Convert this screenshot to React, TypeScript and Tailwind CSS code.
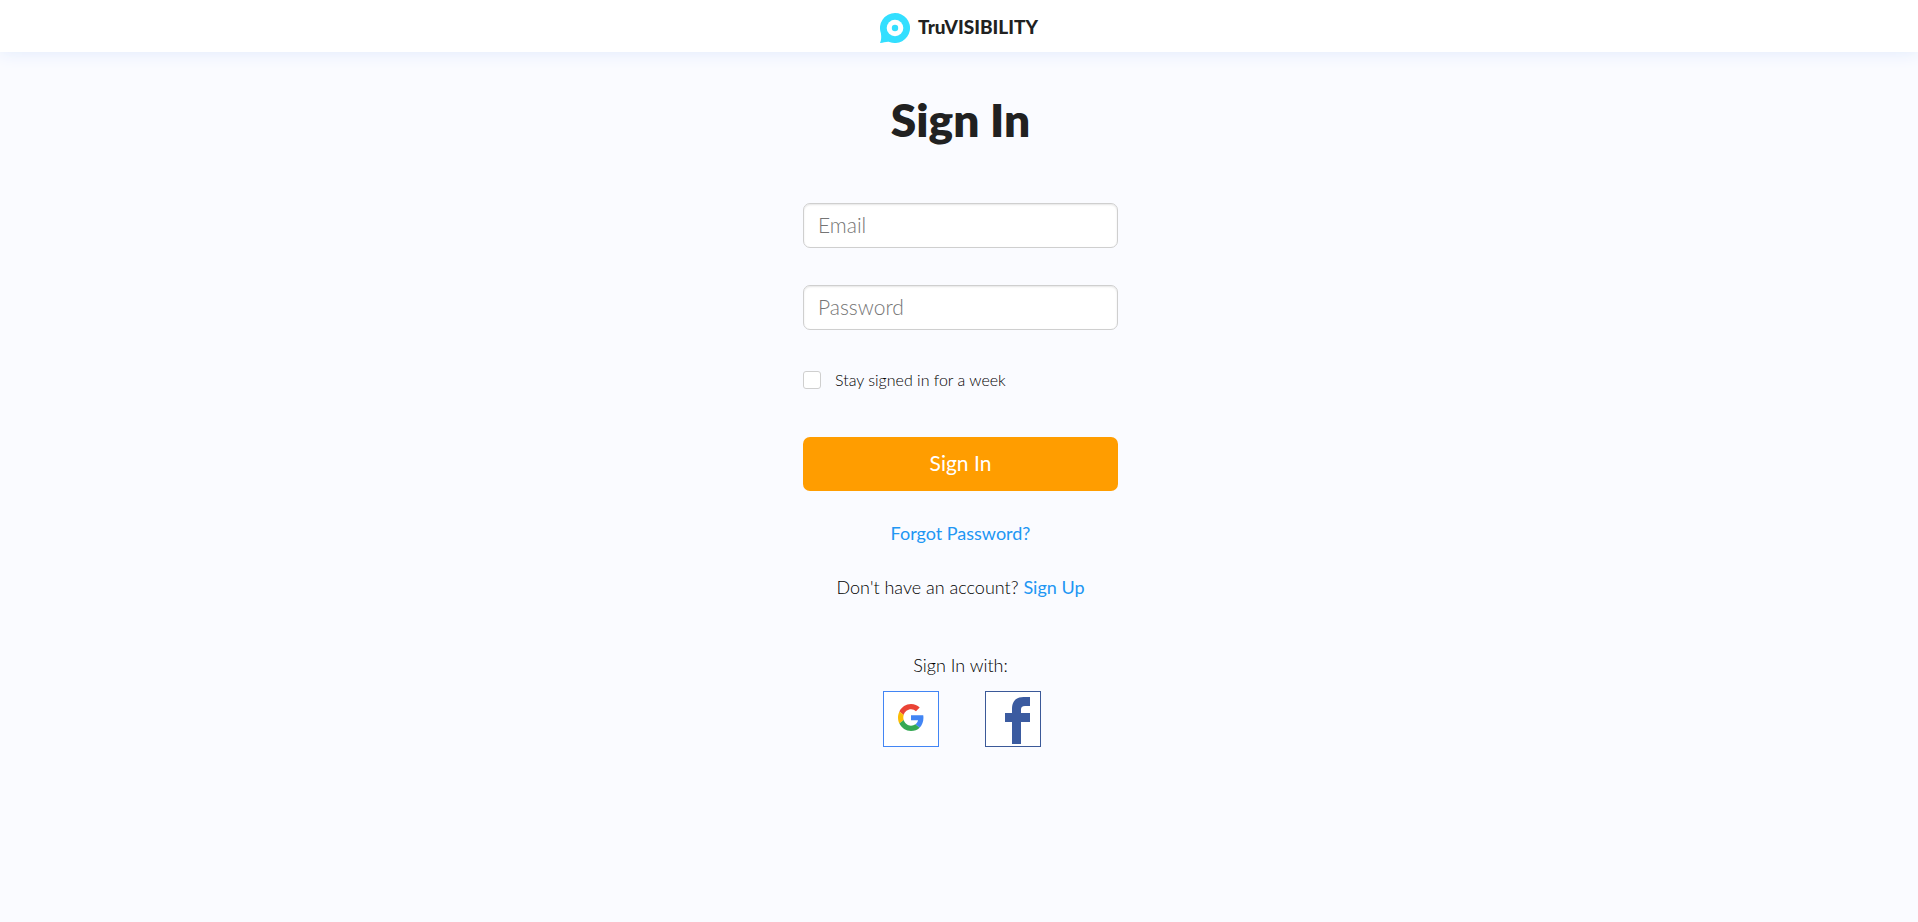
import React from "react";

function LogoMark() {
  return (
    <svg width="30" height="30" viewBox="0 0 30 30" aria-hidden="true">
      <path
        fill="#33dfff"
        d="M15 0a15 15 0 1 1-5.6 28.9C6.6 28.3 3.5 30 0 30c1-2.400 1.600-5 .9-9.800A15 15 0 0 1 15 0z"
      />
      <circle cx="15" cy="15" r="8.300" fill="#fff" />
      <circle cx="15" cy="15" r="3.200" fill="#33dfff" />
    </svg>
  );
}

function GoogleMark() {
  return (
    <svg width="26" height="27" viewBox="0 0 48 48" preserveAspectRatio="none" aria-hidden="true">
      <path fill="#EA4335" d="M24 9.500c3.540 0 6.710 1.220 9.210 3.600l6.850-6.850C35.900 2.380 30.470 0 24 0 14.620 0 6.510 5.380 2.560 13.220l7.980 6.190C12.430 13.720 17.740 9.500 24 9.500z" />
      <path fill="#4285F4" d="M46.980 24.550c0-1.570-.15-3.090-.38-4.550H24v9.020h12.940c-.58 2.960-2.260 5.480-4.780 7.180l7.730 6c4.510-4.180 7.090-10.360 7.090-17.650z" />
      <path fill="#FBBC05" d="M10.530 28.590c-.48-1.450-.76-2.990-.76-4.590s.27-3.140.76-4.590l-7.980-6.190C.92 16.460 0 20.120 0 24c0 3.880.92 7.540 2.560 10.780l7.970-6.190z" />
      <path fill="#34A853" d="M24 48c6.480 0 11.930-2.130 15.890-5.810l-7.730-6c-2.150 1.450-4.920 2.300-8.160 2.300-6.260 0-11.570-4.220-13.470-9.910l-7.980 6.190C6.510 42.620 14.620 48 24 48z" />
    </svg>
  );
}

function FacebookMark() {
  return (
    <svg width="25" height="47" viewBox="0 0 25 47" aria-hidden="true">
      <path
        fill="#3b5ba0"
        d="M7 47V25H0v-9h7v-4C7 4 11.500 0 18.500 0H25v9h-5c-3 0-4 1.200-4 3.500V16h9v9h-9v22z"
      />
    </svg>
  );
}

const fieldClass =
  "h-[45px] w-full rounded-[7px] border border-[#cfcfcf] bg-white px-[14px] pb-[2px] text-[21px] font-light text-[#212121] shadow-[inset_0_1px_2px_rgba(0,0,0,0.1)] outline-none placeholder:text-[#757575] focus:border-[#2196f3]";

export default function App() {
  return (
    <div className="min-h-screen bg-[#fafbff] font-['Lato','Open_Sans',sans-serif] text-[#212121]">
      <header className="flex h-[52px] items-center justify-center gap-2 bg-white pt-1 shadow-[0_0_18px_#dfe9fb]">
        <LogoMark />
        <span className="pb-[2px] text-[19px] leading-6 font-black">TruVISIBILITY</span>
      </header>

      <div className="pl-[3px]">
        <main className="mx-auto flex w-full max-w-[315px] flex-col items-center">
          <h1 className="mt-10 text-[46px] leading-[56px] font-extrabold">Sign In</h1>

          <form className="mt-[55px] flex w-full flex-col" onSubmit={(e) => e.preventDefault()}>
            <input type="email" aria-label="Email" placeholder="Email" className={fieldClass} />
            <input type="password" aria-label="Password" placeholder="Password" className={`${fieldClass} mt-[37px]`} />
            <label className="mt-10 flex items-center gap-[14px] text-base leading-5 font-light text-black">
              <input
                type="checkbox"
                className="size-[18px] appearance-none rounded-[3px] border border-[#cfcfcf] bg-white checked:bg-[#2196f3]"
              />
              Stay signed in for a week
            </label>
            <button type="submit" className="mt-[47px] h-[54px] rounded-[7px] bg-[#ff9d00] pb-[2px] text-[21px] text-white">
              Sign In
            </button>
          </form>

          <a href="#forgot" className="mt-[30px] text-lg leading-6 text-[#2196f3]">
            Forgot Password?
          </a>
          <p className="mt-[30px] text-lg leading-6 font-light whitespace-nowrap text-black">
            Don't have an account?{" "}
            <a href="#signup" className="font-normal text-[#2196f3]">
              Sign Up
            </a>
          </p>

          <p className="mt-[54px] text-lg leading-6 font-light text-black">Sign In with:</p>
          <div className="mt-[14px] flex gap-[46px] pl-[3px]">
            <button type="button" aria-label="Google" className="flex size-14 items-center justify-center border border-[#4285f4] bg-white pb-[3px]">
              <GoogleMark />
            </button>
            <button type="button" aria-label="Facebook" className="flex size-14 items-end justify-end border border-[#3b5998] bg-white pr-[10px] pb-[2px]">
              <FacebookMark />
            </button>
          </div>
        </main>
      </div>
    </div>
  );
}
